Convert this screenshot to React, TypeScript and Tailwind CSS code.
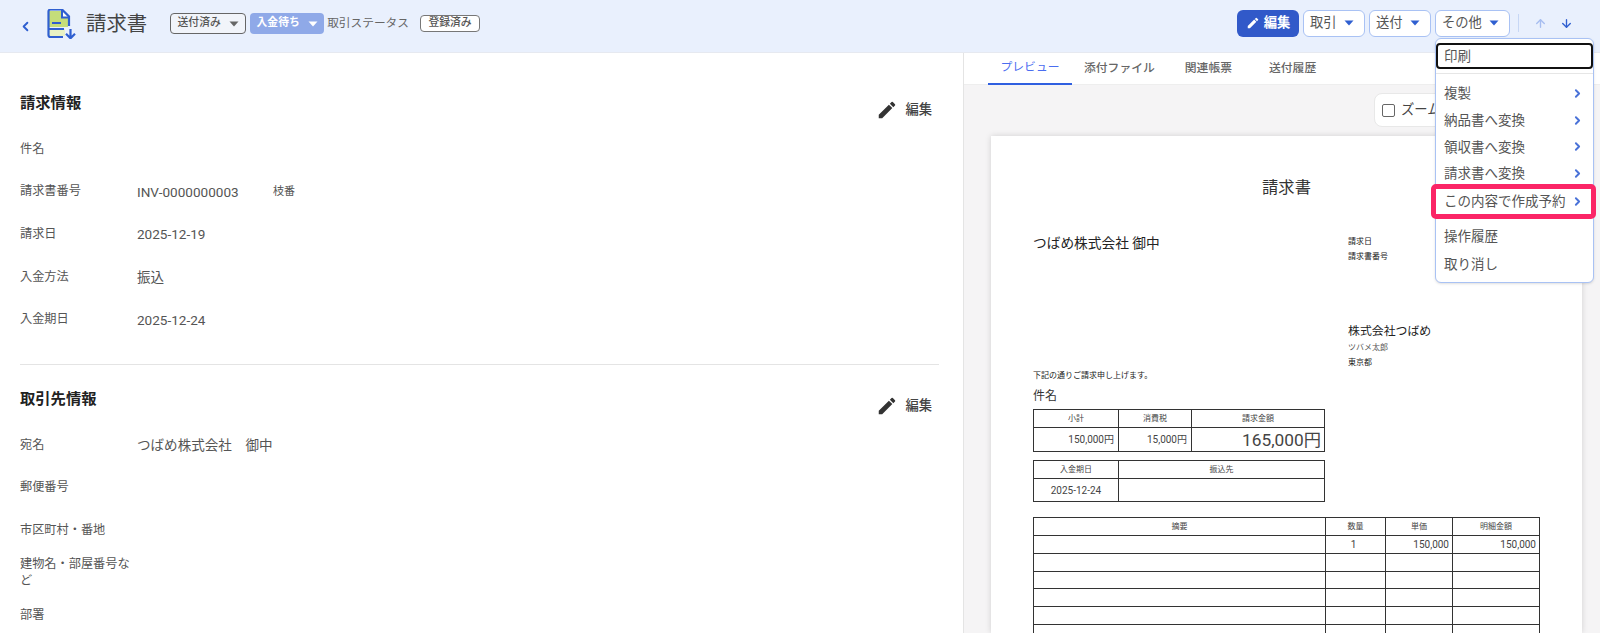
import { ChevronLeft, ChevronRight, ArrowUp, ArrowDown } from "lucide-react";

const font = "font-['Roboto','Noto_Sans_CJK_JP',sans-serif]";

function Caret({ className }: { className: string }) {
  return (
    <svg width="10" height="6" viewBox="0 0 10 6" className={className} fill="currentColor">
      <path d="M0.5 0.5h9L5 5.5z" />
    </svg>
  );
}

function Pencil({ className }: { className: string }) {
  return (
    <svg viewBox="0 0 24 24" className={className} fill="currentColor">
      <path d="M3 17.25V21h3.75L17.81 9.94l-3.75-3.75L3 17.25zM20.71 7.04a1 1 0 0 0 0-1.41l-2.34-2.34a1 1 0 0 0-1.41 0l-1.83 1.83 3.75 3.75 1.83-1.83z" />
    </svg>
  );
}

function DocIcon() {
  return (
    <svg width="30" height="30" viewBox="0 0 30 30" fill="none">
      <path d="M2 2h13l6 6v10H2z" fill="#c5dd7a" />
      <path d="M2 20h16v7H2z" fill="#e9f2c4" />
      <path d="M15 1.5v7h6.5z" fill="#fff" />
      <path d="M16 28H3.5a2 2 0 0 1-2-2V2.5a2 2 0 0 1 2-2h11.5L22 7.5V17" stroke="#2f5fd0" strokeWidth="2.2" />
      <path d="M15 1v7.5h7" stroke="#2f5fd0" strokeWidth="2" />
      <path d="M5 14h9M2 20h15" stroke="#2f5fd0" strokeWidth="2.2" />
      <path d="M23.5 20v9M19 24.8l4.5 4.5 4.5-4.5" stroke="#2f5fd0" strokeWidth="2.2" />
    </svg>
  );
}

function Btn({ label, w }: { label: string; w: string }) {
  return (
    <div className={`${w} h-[27px] flex items-center justify-between pl-[6px] pr-[10px] bg-white border border-[#a9c2f4] rounded-[6px] text-[13.3px] text-[#555]`}>
      {label}
      <Caret className="text-[#2f5fd0]" />
    </div>
  );
}

function Row({ label, value, extra }: { label: string; value?: string; extra?: string }) {
  return (
    <div className="flex items-center h-[42.6px]">
      <div className="w-[117px] shrink-0 text-[12.2px] leading-[17px] text-[#555]">{label}</div>
      <div className="w-[136px] text-[13.55px] text-[#555]">{value}</div>
      {extra && <div className="text-[11px] text-[#555]">{extra}</div>}
    </div>
  );
}

function SectionHead({ title }: { title: string }) {
  return (
    <div className="flex justify-between pr-[7px]">
      <h2 className="text-[15.3px] font-bold text-[#222] leading-[22px]">{title}</h2>
      <div className="flex items-center gap-[7px] mt-[7px] h-[22px] text-[13.3px] font-medium text-[#444]">
        <Pencil className="w-[22px] h-[22px] text-[#333]" />
        編集
      </div>
    </div>
  );
}

function MenuItem({ label }: { label: string }) {
  return (
    <div className="h-[26.7px] flex items-center justify-between pl-2 pr-[9px] text-[13.5px] text-[#555]">
      {label}
      <ChevronRight className="w-[13px] h-[13px] text-[#4a72d8]" strokeWidth={3.5} />
    </div>
  );
}

const cell = "border border-[#333] text-center text-[#444]";

export default function App() {
  return (
    <div className={`w-[1600px] h-[633px] overflow-hidden bg-white flex flex-col ${font}`}>
      <header className="h-[53px] shrink-0 bg-[#e9f0fd] border-b border-[#e6e9f0] flex items-center pl-[18px] pr-[27px] relative">
        <ChevronLeft className="w-[15px] h-[15px] text-[#2f5fd0]" strokeWidth={3} />
        <div className="ml-[14px] mb-[4px]"><DocIcon /></div>
        <h1 className="ml-[9px] mb-[4px] text-[20.4px] text-[#444]">請求書</h1>
        <div className="ml-[23px] mb-[5px] w-[76px] h-[21px] flex items-center justify-center gap-[8px] bg-[#f1f4fa] border border-[#666] rounded-[4px] text-[10.8px] font-medium text-[#555]">
          送付済み
          <Caret className="text-[#666]" />
        </div>
        <div className="ml-[4px] mb-[5px] w-[74px] h-[21px] flex items-center justify-center gap-[8px] bg-[#8fa9e8] rounded-[4px] text-[10.8px] font-bold text-white">
          入金待ち
          <Caret className="text-white" />
        </div>
        <div className="ml-[3px] mb-[5px] text-[11.7px] text-[#666]">取引ステータス</div>
        <div className="ml-[11px] mb-[5px] w-[60px] h-[17px] flex items-center justify-center bg-white border border-[#777] rounded-[4px] text-[10.8px] font-medium text-[#555]">登録済み</div>

        <div className="ml-auto mb-[6px] flex items-center gap-[4px]">
          <div className="w-[62px] h-[27px] flex items-center justify-center gap-[4px] bg-[#3159c9] rounded-[6px] text-[13.3px] font-bold text-white">
            <Pencil className="w-[14px] h-[14px] text-white" />
            編集
          </div>
          <Btn label="取引" w="w-[62px]" />
          <Btn label="送付" w="w-[62px]" />
          <Btn label="その他" w="w-[75px]" />
          <div className="ml-[4px] w-px h-[18px] bg-[#c7d7f5]" />
          <ArrowUp className="ml-[11px] w-[13px] h-[13px] text-[#a6bdf0]" strokeWidth={2.5} />
          <ArrowDown className="ml-[9px] w-[13px] h-[13px] text-[#2f5fd0]" strokeWidth={2.5} />
        </div>

        {/* その他 dropdown */}
        <div className="absolute z-20 left-[1435px] top-[38px] w-[159px] h-[245px] bg-white border border-[#a9c2f4] rounded-[6px] pt-[4px] pb-[4px] shadow-sm">
          <div className="h-[26px] flex items-center pl-[6px] border-2 border-[#111] rounded-[4px] text-[13.5px] text-[#555]">印刷</div>
          <div className="my-[4px] h-px bg-[#e6e6e6]" />
          <div className="pt-[2px]">
            <MenuItem label="複製" />
            <MenuItem label="納品書へ変換" />
            <MenuItem label="領収書へ変換" />
            <MenuItem label="請求書へ変換" />
            <div className="relative mt-[1px]">
              <MenuItem label="この内容で作成予約" />
              <div className="absolute -left-[5px] -right-[3px] -top-[4px] -bottom-[5px] border-[5px] border-[#fb2566] rounded-[5px]" />
            </div>
          </div>
          <div className="mt-[8px]">
            <div className="h-[27.5px] flex items-center pl-2 text-[13.5px] text-[#555]">操作履歴</div>
            <div className="h-[27.5px] flex items-center pl-2 text-[13.5px] text-[#555]">取り消し</div>
          </div>
        </div>
      </header>

      <div className="flex flex-1 min-h-0">
        <main className="w-[964px] shrink-0 border-r border-[#e4e4e4] pl-[20px] pr-[24px] pt-[39px]">
          <SectionHead title="請求情報" />
          <div className="mt-[7px]">
            <Row label="件名" />
            <Row label="請求書番号" value="INV-0000000003" extra="枝番" />
            <Row label="請求日" value="2025-12-19" />
            <Row label="入金方法" value="振込" />
            <Row label="入金期日" value="2025-12-24" />
          </div>
          <div className="mt-[23px] h-px bg-[#e4e4e4]" />
          <div className="mt-[23px]">
            <SectionHead title="取引先情報" />
          </div>
          <div className="mt-[7px]">
            <Row label="宛名" value="つばめ株式会社　御中" />
            <Row label="郵便番号" />
            <Row label="市区町村・番地" />
            <div className="h-[42px] flex items-center">
              <div className="w-[117px] text-[12.2px] leading-[17px] text-[#555]">建物名・部屋番号など</div>
            </div>
            <Row label="部署" />
          </div>
        </main>

        <section className="flex-1 min-w-0 flex flex-col bg-[#f5f4f5]">
          <nav className="h-[32px] shrink-0 bg-white border-b border-[#eeeeee] flex pl-[24px] text-[11.8px] font-medium text-[#666]">
            <div className="w-[84px] h-[32px] flex items-center justify-center border-b-2 border-[#2f5fe0] text-[#4a6df0] font-normal">プレビュー</div>
            <div className="ml-[12px] flex items-center">添付ファイル</div>
            <div className="ml-[30px] flex items-center">関連帳票</div>
            <div className="ml-[37px] flex items-center">送付履歴</div>
          </nav>

          <div className="flex justify-end pr-[50px] pt-[8px]">
            <div className="w-[176px] h-[34px] flex items-center gap-[6px] pl-[7px] bg-white border border-[#e8e8e8] rounded-[8px] text-[13.3px] text-[#444]">
              <span className="w-[13px] h-[13px] border border-[#666] rounded-[2px]" />
              ズーム
            </div>
          </div>

          <div className="ml-[27px] mt-[9px] w-[591px] flex-1 bg-white shadow-[0_0_6px_rgba(0,0,0,0.15)] pl-[42px] pr-[42px] pt-[40px] overflow-hidden text-[#222]">
            <div className="text-center text-[16.3px] leading-[24px] text-[#333]">請求書</div>
            <div className="flex mt-[33px]">
              <div className="w-[315px] text-[13.7px] leading-[20px] text-[#222]">つばめ株式会社 御中</div>
              <div className="pt-[1px] text-[8px] leading-[15px] text-[#222]">
                <div>請求日</div>
                <div>請求書番号</div>
              </div>
            </div>
            <div className="ml-[315px] mt-[58px] text-[8px] leading-[15.5px]">
              <div className="text-[11.9px] leading-[18px]">株式会社つばめ</div>
              <div className="text-[#555]">ツバメ太郎</div>
              <div className="-mt-[1px]">東京都</div>
            </div>
            <div className="text-[8px] leading-[12px]">下記の通りご請求申し上げます。</div>
            <div className="mt-[5px] text-[12px] leading-[18px] text-[#333]">件名</div>

            <table className="mt-[4px] w-[292px] table-fixed border-collapse text-[8px]">
              <tbody>
                <tr className="h-[18px]">
                  <td className={`${cell} w-[85px]`}>小計</td>
                  <td className={`${cell} w-[73px]`}>消費税</td>
                  <td className={cell}>請求金額</td>
                </tr>
                <tr className="h-[24px]">
                  <td className={`${cell} text-right pr-[4px] text-[10px]`}>150,000円</td>
                  <td className={`${cell} text-right pr-[4px] text-[10px]`}>15,000円</td>
                  <td className={`${cell} text-right pr-[3px] text-[17.3px] leading-[20px] text-[#222]`}>165,000円</td>
                </tr>
              </tbody>
            </table>

            <table className="mt-[8px] w-[292px] table-fixed border-collapse text-[8px]">
              <tbody>
                <tr className="h-[18px]">
                  <td className={`${cell} w-[85px]`}>入金期日</td>
                  <td className={cell}>振込先</td>
                </tr>
                <tr className="h-[23px]">
                  <td className={`${cell} text-[10px]`}>2025-12-24</td>
                  <td className={cell} />
                </tr>
              </tbody>
            </table>

            <table className="mt-[15px] w-[507px] table-fixed border-collapse text-[8px]">
              <tbody>
                <tr className="h-[18px]">
                  <td className={`${cell} w-[292px]`}>摘要</td>
                  <td className={`${cell} w-[60px]`}>数量</td>
                  <td className={`${cell} w-[67px]`}>単価</td>
                  <td className={cell}>明細金額</td>
                </tr>
                <tr className="h-[18px]">
                  <td className={cell} />
                  <td className={`${cell} text-[10px] pr-[4px]`}>1</td>
                  <td className={`${cell} text-right pr-[3px] text-[10px]`}>150,000</td>
                  <td className={`${cell} text-right pr-[3px] text-[10px]`}>150,000</td>
                </tr>
                {[0, 1, 2, 3, 4, 5].map((i) => (
                  <tr key={i} className="h-[17.7px]">
                    <td className={cell} />
                    <td className={cell} />
                    <td className={cell} />
                    <td className={cell} />
                  </tr>
                ))}
              </tbody>
            </table>
          </div>
        </section>
      </div>
    </div>
  );
}
